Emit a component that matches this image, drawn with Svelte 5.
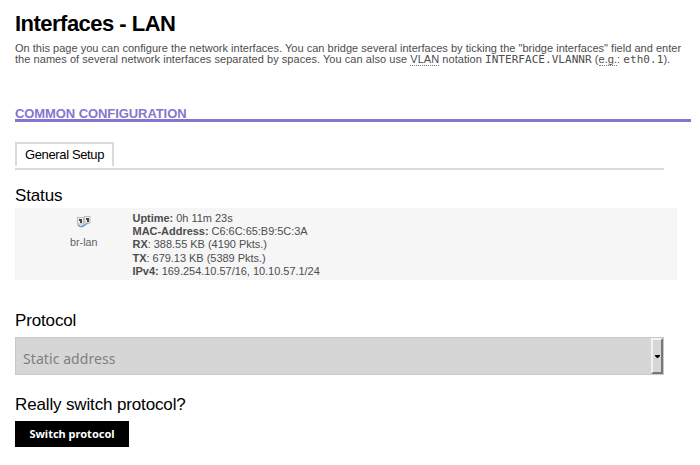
<script>
  const stats = [
    ['Uptime:', ' 0h 11m 23s'],
    ['MAC-Address:', ' C6:6C:65:B9:5C:3A'],
    ['RX', ': 388.55 KB (4190 Pkts.)'],
    ['TX', ': 679.13 KB (5389 Pkts.)'],
    ['IPv4:', ' 169.254.10.57/16, 10.10.57.1/24']
  ];
</script>

<main>
  <h1>Interfaces - LAN</h1>
  <p class="intro">
    <span class="l1">On this page you can configure the network interfaces. You can bridge several interfaces by ticking the "bridge interfaces" field and enter</span>
    <span class="l2">the names of several network interfaces separated by spaces. You can also use <abbr>VLAN</abbr> notation <code>INTERFACE.VLANNR</code> (<abbr>e.g.</abbr>: <code>eth0.1</code>).</span>
  </p>
  <h2><span>COMMON CONFIGURATION</span></h2>
  <nav><a class="tab" href="#general"><span>General Setup</span></a></nav>
  <h3 class="status-title">Status</h3>
  <section class="status">
    <div class="iface">
      <svg width="16" height="14" viewBox="0 0 16 14">
        <path d="M2 10.500C3 13 6 13 8 11.500S10 9.500 12.500 9" fill="none" stroke="#719bcd" stroke-width="1.600" />
        <rect x="1.500" y="3.500" width="6" height="6.500" fill="#eeeeeb" stroke="#bcbcb8" />
        <rect x="8.500" y="2.500" width="5.500" height="6.500" fill="#eeeeeb" stroke="#bcbcb8" />
        <path d="M3 5h3v4H4V7H3zM10 4h3v4h-2V6h-1z" fill="#444" />
      </svg>
      <span>br-lan</span>
    </div>
    <div class="stats">
      {#each stats as [name, value]}
        <div><b>{name}</b>{value}</div>
      {/each}
    </div>
  </section>
  <h3 class="protocol-title">Protocol</h3>
  <div class="select">
    <span>Static address</span>
    <i><svg width="5" height="3" viewBox="0 0 5 3"><path d="M0 0h5v1L3 3H2L0 1z" /></svg></i>
  </div>
  <h3 class="switch-title">Really switch protocol?</h3>
  <button>Switch protocol</button>
</main>

<style>
  :global(body) { margin: 0; background: #fff; }
  main {
    box-sizing: border-box;
    width: 700px;
    height: 465px;
    padding: 11px 9px 0 15px;
    overflow: hidden;
    font-family: "Liberation Sans", Arial, sans-serif;
    color: #000;
  }
  h1, h2, h3, p { margin: 0; }
  h1 { font-size: 22px; line-height: 26px; letter-spacing: -0.52px; }
  .intro { margin-top: 6px; height: 22px; font-size: 11px; line-height: 11px; color: #4d4d4d; white-space: nowrap; }
  .intro > span { display: block; height: 11px; }
  .l1 { letter-spacing: 0.02px; }
  .l2 { letter-spacing: 0.05px; }
  abbr { border-bottom: 1px dotted #777; }
  code { font: 11px/11px "DejaVu Sans Mono", monospace; }
  h2 {
    margin-top: 42px;
    height: 12px;
    border-bottom: 3px solid #8476d0;
    width: 676px;
    font-size: 13px;
    line-height: 13px;
    letter-spacing: -0.08px;
    color: #8476d0;
  }
  nav { margin-top: 20px; height: 26px; width: 649px; border-bottom: 2px solid #dadada; }
  .tab {
    display: block;
    box-sizing: border-box;
    width: 99px;
    height: 24px;
    padding-left: 8px;
    border: 2px solid #dadada;
    border-bottom: 0;
    font-size: 13px;
    line-height: 22px;
    letter-spacing: -0.37px;
    color: #000;
    text-decoration: none;
    white-space: nowrap;
  }
  h3 { font-size: 17px; line-height: 20px; font-weight: 400; letter-spacing: -0.14px; }
  .status-title { margin-top: 16px; height: 22px; }
  .status { display: flex; width: 662px; height: 72px; background: #f6f6f6; font-size: 11px; color: #4d4d4d; }
  .iface { display: flex; flex-direction: column; align-items: center; width: 117.500px; padding-left: 20px; box-sizing: border-box; padding-top: 6px; }
  .iface span { margin-top: 8px; line-height: 13px; font-size: 10.700px; color: #606060; }
  .stats { padding-top: 3.5px; line-height: 13.4px; letter-spacing: -0.03px; white-space: pre; }
  .protocol-title { margin-top: 31px; height: 26px; }
  .select {
    display: flex;
    box-sizing: border-box;
    justify-content: space-between;
    width: 649px;
    height: 38px;
    border: 1px solid #c8c8c8;
    background: #d6d6d6;
    font: 14px/41px "Noto Sans", sans-serif;
    letter-spacing: 0.08px;
    color: #808080;
  }
  .select span { padding-left: 7px; }
  .select i {
    display: flex;
    align-items: center;
    justify-content: center;
    box-sizing: border-box;
    width: 12px;
    height: 36px;
    border: 2px solid;
    border-color: #f2f2f2 #777 #777 #f2f2f2;
  }
  .switch-title { margin-top: 20px; height: 26px; }
  button {
    display: block;
    width: 114px;
    height: 26px;
    padding: 0;
    border: 0;
    background: #000;
    color: #fff;
    font: 700 11px/26px "Noto Sans", sans-serif;
  }
</style>
